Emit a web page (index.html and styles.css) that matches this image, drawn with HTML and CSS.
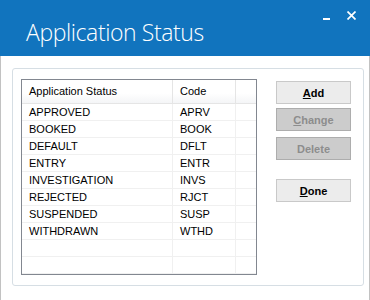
FILE: index.html
```html
<!DOCTYPE html>
<html lang="en">
<head>
    <meta charset="UTF-8">
    <title>Application Status</title>
    <link rel="stylesheet" href="styles.css">
</head>
<body>
    <div class="window">
        <!-- Barra de titulo -->
        <div class="titlebar">
            <h1 class="title">Application Status</h1>
            <div class="controls">
                <span class="minimize"></span>
                <svg class="close" width="9" height="9" viewBox="0 0 9 9">
                    <path d="M0.5 0.5 L8.5 8.5 M8.5 0.5 L0.5 8.5" stroke="#fff" stroke-width="1.7" fill="none"/>
                </svg>
            </div>
        </div>

        <div class="content">
            <div class="group">
                <!-- Lista -->
                <div class="list">
                    <div class="row header">
                        <div class="cell">Application Status</div>
                        <div class="cell">Code</div>
                        <div class="cell last"></div>
                    </div>
                    <div class="row"><div class="cell">APPROVED</div><div class="cell">APRV</div><div class="cell last"></div></div>
                    <div class="row"><div class="cell">BOOKED</div><div class="cell">BOOK</div><div class="cell last"></div></div>
                    <div class="row"><div class="cell">DEFAULT</div><div class="cell">DFLT</div><div class="cell last"></div></div>
                    <div class="row"><div class="cell">ENTRY</div><div class="cell">ENTR</div><div class="cell last"></div></div>
                    <div class="row"><div class="cell">INVESTIGATION</div><div class="cell">INVS</div><div class="cell last"></div></div>
                    <div class="row"><div class="cell">REJECTED</div><div class="cell">RJCT</div><div class="cell last"></div></div>
                    <div class="row"><div class="cell">SUSPENDED</div><div class="cell">SUSP</div><div class="cell last"></div></div>
                    <div class="row"><div class="cell">WITHDRAWN</div><div class="cell">WTHD</div><div class="cell last"></div></div>
                    <div class="row"><div class="cell"></div><div class="cell"></div><div class="cell last"></div></div>
                    <div class="row"><div class="cell"></div><div class="cell"></div><div class="cell last"></div></div>
                </div>

                <!-- Botones -->
                <div class="buttons">
                    <button class="btn btn-add"><u>A</u>dd</button>
                    <button class="btn btn-change" disabled><u>C</u>hange</button>
                    <button class="btn btn-delete" disabled>Delete</button>
                    <button class="btn btn-done"><u>D</u>one</button>
                </div>
            </div>
        </div>
    </div>
</body>
</html>
```

FILE: styles.css
```css
body {
    margin: 0;
    font-family: "Liberation Sans", Arial, sans-serif;
    background: #fff;
}
.window {
    width: 370px;
    height: 300px;
    display: flex;
    flex-direction: column;
}
.titlebar {
    height: 56px;
    flex-shrink: 0;
    background-color: #1174be;
    display: flex;
    justify-content: space-between;
    align-items: flex-start;
}
.title {
    margin: 0;
    padding: 15px 0 0 26px;
    font-family: "Open Sans", sans-serif;
    font-weight: 300;
    font-size: 23px;
    letter-spacing: -0.4px;
    line-height: 34px;
    color: #fff;
}
.controls {
    display: flex;
    align-items: flex-start;
    padding-top: 11px;
    margin-right: 14px;
}
.minimize {
    width: 7px;
    height: 2px;
    margin-top: 7px;
    margin-right: 17px;
    background: #fff;
}
.content {
    flex: 1;
    display: flex;
    border: 1px solid #c2c2c2;
    border-top: none;
    padding: 12px 5px 16px 11px;
}
.group {
    flex: 1;
    display: flex;
    align-items: flex-start;
    gap: 19px;
    border: 1px solid #d6dee4;
    border-radius: 3px;
    padding: 10px 8px;
}
.list {
    width: 236px;
    height: 196px;
    box-sizing: border-box;
    border: 1px solid #828790;
    display: flex;
    flex-direction: column;
    font-size: 11px;
    color: #000;
}
.row {
    display: grid;
    grid-template-columns: 151px 63px 1fr;
    height: 17px;
    flex-shrink: 0;
}
.cell {
    box-sizing: border-box;
    border-right: 1px solid #f0f0f0;
    border-bottom: 1px solid #f0f0f0;
    padding: 1px 0 0 7px;
    line-height: 15px;
    white-space: nowrap;
    overflow: hidden;
}
.cell.last {
    border-right: none;
}
.row.header {
    height: 24px;
    background: linear-gradient(#ffffff 55%, #f3f4f6);
}
.row.header .cell {
    padding-top: 0;
    line-height: 23px;
    border-right-color: #e5e5e5;
    border-bottom-color: #e5e5e5;
}
.buttons {
    display: flex;
    flex-direction: column;
    margin-top: 2px;
}
.btn {
    width: 75px;
    height: 23px;
    box-sizing: border-box;
    padding: 0;
    font-family: "Liberation Sans", Arial, sans-serif;
    font-size: 11px;
    font-weight: bold;
    color: #000;
    background: #ececec;
    border: 1px solid #c9c9c9;
}
.btn:disabled {
    color: #8d8d8d;
    background: #cccccc;
    border-color: #adadad;
}
.btn-change {
    margin-top: 4px;
}
.btn-delete {
    margin-top: 6px;
}
.btn-done {
    margin-top: 19px;
}
```
